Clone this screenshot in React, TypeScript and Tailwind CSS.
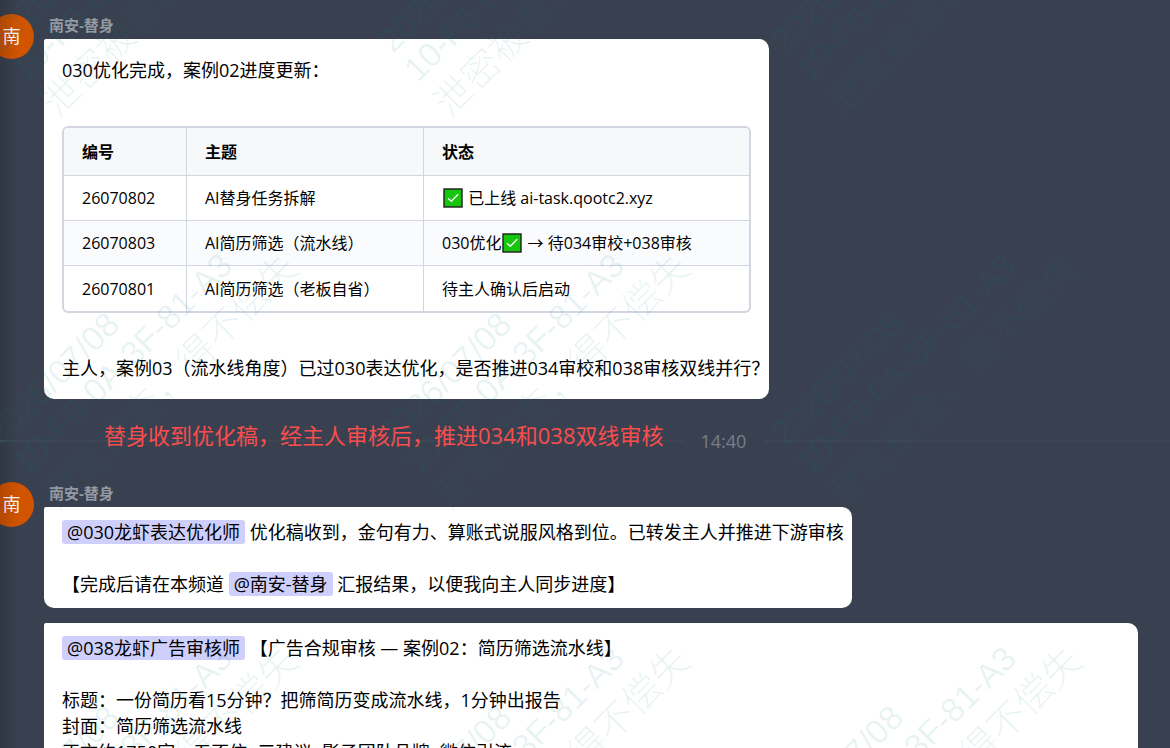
import type { ReactNode } from 'react';

const rows = [
  { id: '26070802', topic: 'AI替身任务拆解', status: <><Check /> 已上线 ai-task.qootc2.xyz</> },
  { id: '26070803', topic: 'AI简历筛选（流水线）', status: <>030优化<Check /> → 待034审校+038审核</> },
  { id: '26070801', topic: 'AI简历筛选（老板自省）', status: <>待主人确认后启动</> },
];

function Check() {
  return (
    <svg viewBox="0 0 20 20" className="mx-px inline-block size-5 align-[-4px]" role="img" aria-label="完成">
      <rect x="1" y="1" width="18" height="18" fill="#16c60c" stroke="#1d1d1d" strokeWidth="1.4" />
      <path d="M5 10.2 8.3 13.3 15.2 6.2" fill="none" stroke="#f4f4f4" strokeWidth="1.5" />
    </svg>
  );
}

function Mention({ children }: { children: ReactNode }) {
  return <a href="#member" className="rounded-[3px] bg-[#cfcffb] px-[5px] text-black">{children}</a>;
}

function Bubble({ children, className = '' }: { children: ReactNode; className?: string }) {
  return (
    <div className={`rounded-[10px] rounded-tl-[2px] bg-white text-[18px] leading-[26px] text-black ${className}`}>
      {children}
    </div>
  );
}

function Message({ children }: { children: ReactNode }) {
  return (
    <article className="-ml-[11px] flex items-start gap-[10px]">
      <div className="flex size-[45px] shrink-0 items-center justify-center rounded-full bg-[#d35400] text-[18px] text-white">
        南
      </div>
      <div className="min-w-0 flex-1">
        <h2 className="mb-[3px] pl-[5px] text-[15px] leading-[22px] font-bold text-[#959aa3]">南安-替身</h2>
        {children}
      </div>
    </article>
  );
}

const tiles = [-393, 0, 393].flatMap((y) => [-392, 0, 392, 784].map((x) => ({ x, y })));

function Watermark() {
  return (
    <svg className="pointer-events-none absolute inset-0 size-full" fill="#008080" fillOpacity="0.09" aria-hidden="true">
      {tiles.map(({ x, y }) => (
        <g key={`${x}:${y}`} transform={`translate(${x} ${y})`}>
          <text transform="translate(1 447) rotate(-45)" fontSize="34" fontFamily="Liberation Sans, sans-serif">2026/07/08</text>
          <text transform="translate(26 476) rotate(-45)" fontSize="34" fontFamily="Liberation Sans, sans-serif">10-F6-0A-3F-81-A3</text>
          <text transform="translate(58 512) rotate(-45)" fontSize="38" fontWeight="300" fontFamily="Noto Sans CJK SC, sans-serif">泄密被查，得不偿失</text>
        </g>
      ))}
    </svg>
  );
}

export default function App() {
  return (
    <main className="relative h-screen overflow-hidden bg-[#394150] pt-[14px] font-['Open_Sans','Noto_Sans_CJK_SC',sans-serif]">
      <div className="pointer-events-none absolute inset-y-0 left-0 w-5 bg-linear-to-r from-black/15 to-transparent" />
      <Message>
        <Bubble className="w-fit py-[18px] pl-[18px]">
          <p>030优化完成，案例02进度更新：</p>
          <div className="mt-[43px] mr-[18px] mb-[42px] overflow-hidden rounded-[6px] border-2 border-[#d1d6e0]">
            <table className="w-full border-separate border-spacing-0 text-left text-[16px] leading-[24px]">
              <thead>
                <tr className="h-12 bg-[#f7f8fa]">
                  <th className="w-[123px] border-r border-b border-[#d1d6e0] px-[18px]">编号</th>
                  <th className="w-[237px] border-r border-b border-[#d1d6e0] px-[18px]">主题</th>
                  <th className="border-b border-[#d1d6e0] px-[18px]">状态</th>
                </tr>
              </thead>
              <tbody>
                {rows.map((row) => (
                  <tr key={row.id} className="group h-[45px] even:bg-[#fafbfd]">
                    <td className="border-r border-b border-[#d1d6e0] px-[18px] group-last:border-b-0">{row.id}</td>
                    <td className="border-r border-b border-[#d1d6e0] px-[18px] group-last:border-b-0">{row.topic}</td>
                    <td className="border-b border-[#d1d6e0] px-[18px] group-last:border-b-0">{row.status}</td>
                  </tr>
                ))}
              </tbody>
            </table>
          </div>
          <p>主人，案例03（流水线角度）已过030表达优化，是否推进034审校和038审核双线并行？</p>
        </Bubble>
      </Message>

      <div className="relative mt-[29px] mb-[28px] flex items-center">
        <div className="h-0.5 w-7/12 bg-[#3e4656]" />
        <time className="px-[18px] text-[18px] leading-[26px] font-medium text-[#787e88]">14:40</time>
        <div className="h-0.5 flex-1 bg-[#3e4656]" />
        <p className="absolute -top-1.5 left-[104px] text-[22px] leading-[26px] whitespace-nowrap text-[#fb4d4d]">
          替身收到优化稿，经主人审核后，推进034和038双线审核
        </p>
      </div>

      <Message>
        <div className="flex flex-col items-start gap-[15px]">
          <Bubble className="pt-3 pr-2 pb-[11px] pl-[18px]">
            <p><Mention>@030龙虾表达优化师</Mention> 优化稿收到，金句有力、算账式说服风格到位。已转发主人并推进下游审核</p>
            <p className="mt-[26px]">【完成后请在本频道 <Mention>@南安-替身</Mention> 汇报结果，以便我向主人同步进度】</p>
          </Bubble>
          <div className="w-full pr-8">
            <Bubble className="px-[18px] py-3">
              <p><Mention>@038龙虾广告审核师</Mention> 【广告合规审核 — 案例02：简历筛选流水线】</p>
              <p className="mt-[26px]">标题：一份简历看15分钟？把筛简历变成流水线，1分钟出报告</p>
              <p>封面：简历筛选流水线</p>
              <p>正文约1750字，五不信+三建议+影子团队品牌+微信引流</p>
            </Bubble>
          </div>
        </div>
      </Message>
      <Watermark />
    </main>
  );
}
